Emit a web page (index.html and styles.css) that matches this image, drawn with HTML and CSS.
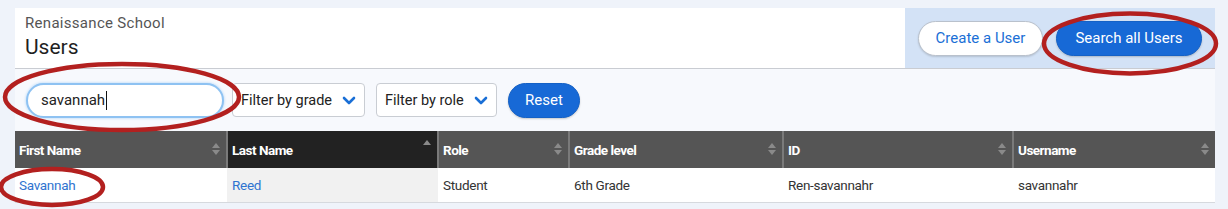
FILE: index.html
```html
<!DOCTYPE html>
<html>
<head>
<meta charset="utf-8">
<link rel="stylesheet" href="styles.css">
</head>
<body>
<div class="card">
  <div class="header">
    <div class="titles">
      <div class="school">Renaissance School</div>
      <div class="title">Users</div>
    </div>
    <div class="actions">
      <button class="btn btn-white">Create a User</button>
      <button class="btn btn-blue">Search all Users</button>
    </div>
  </div>
  <div class="filters">
    <div class="search">savannah<span class="caret"></span></div>
    <div class="select select-grade"><span>Filter by grade</span>
      <svg class="chev" width="14" height="10" viewBox="0 0 14 10"><path d="M2 2 L7 7 L12 2" fill="none" stroke="#1a6fd6" stroke-width="2.6" stroke-linecap="round" stroke-linejoin="round"/></svg>
    </div>
    <div class="select select-role"><span>Filter by role</span>
      <svg class="chev" width="14" height="10" viewBox="0 0 14 10"><path d="M2 2 L7 7 L12 2" fill="none" stroke="#1a6fd6" stroke-width="2.6" stroke-linecap="round" stroke-linejoin="round"/></svg>
    </div>
    <button class="btn btn-blue btn-reset">Reset</button>
  </div>
  <table class="users">
    <colgroup>
      <col class="c1"><col class="c2"><col class="c3"><col class="c4"><col class="c5"><col class="c6">
    </colgroup>
    <thead>
      <tr>
        <th><span>First Name</span><i class="sort both"></i></th>
        <th class="active"><span>Last Name</span><i class="sort up"></i></th>
        <th><span>Role</span><i class="sort both"></i></th>
        <th><span>Grade level</span><i class="sort both"></i></th>
        <th><span>ID</span><i class="sort both"></i></th>
        <th><span>Username</span><i class="sort both"></i></th>
      </tr>
    </thead>
    <tbody>
      <tr>
        <td><a>Savannah</a></td>
        <td class="active"><a>Reed</a></td>
        <td>Student</td>
        <td>6th Grade</td>
        <td>Ren-savannahr</td>
        <td>savannahr</td>
      </tr>
    </tbody>
  </table>
</div>
<svg class="marks" width="1228" height="209" viewBox="0 0 1228 209">
  <ellipse cx="122" cy="97" rx="117" ry="33" fill="none" stroke="#b3201f" stroke-width="4.5"/>
  <ellipse cx="1130" cy="43.5" rx="86" ry="30" fill="none" stroke="#b3201f" stroke-width="4.5"/>
  <ellipse cx="52" cy="187" rx="51" ry="18" fill="none" stroke="#b3201f" stroke-width="4.5"/>
</svg>
</body>
</html>
```

FILE: styles.css
```css
* { box-sizing: border-box; }
html, body { margin: 0; padding: 0; }
body {
  background: #eff3fa;
  font-family: Roboto, "Liberation Sans", sans-serif;
  width: 1228px;
  height: 209px;
  overflow: hidden;
  position: relative;
}
.card {
  margin: 8px 0 0 15px;
  width: 1200px;
  background: #f7f9fd;
}
.header {
  display: flex;
  height: 61px;
  background: #fff;
  border-bottom: 1px solid #c9ccd2;
}
.titles {
  flex: 1;
  padding: 5px 0 0 10px;
}
.school {
  font-size: 15px;
  letter-spacing: 0.3px;
  color: #555;
  line-height: 20px;
}
.title {
  font-size: 21px;
  color: #1f1f1f;
  line-height: 28px;
}
.actions {
  width: 310px;
  background: #d3e2f6;
  display: flex;
  align-items: center;
  padding: 0 0 0 13px;
  gap: 13px;
}
.btn {
  font-family: Roboto, "Liberation Sans", sans-serif;
  font-size: 15px;
  height: 35px;
  border-radius: 18px;
  padding: 0 16px;
  cursor: pointer;
  white-space: nowrap;
}
.btn-white {
  background: #fff;
  color: #1a6fd6;
  border: 1px solid #b9c1cc;
  box-shadow: 0 1px 2px rgba(0,0,0,0.15);
  width: 125px;
}
.btn-blue {
  background: #1769d6;
  color: #fff;
  border: 1px solid #1461c6;
  box-shadow: 0 1px 2px rgba(0,0,0,0.2);
  width: 146px;
}
.filters {
  display: flex;
  align-items: center;
  height: 62px;
  padding: 0 0 0 11px;
  gap: 8px;
}
.search {
  width: 198px;
  height: 35px;
  background: #fff;
  border: 2px solid #8ec2f2;
  box-shadow: 0 0 3px #a8d1f7;
  border-radius: 18px;
  padding: 0 0 0 13px;
  font-size: 15px;
  color: #222;
  display: flex;
  align-items: center;
}
.caret {
  display: inline-block;
  width: 1px;
  height: 19px;
  background: #111;
  margin-left: 1px;
}
.select {
  height: 34px;
  background: #fff;
  border: 1px solid #c9cdd3;
  border-radius: 4px;
  font-size: 14.5px;
  color: #222;
  display: flex;
  align-items: center;
  justify-content: space-between;
  padding: 0 8px 0 8px;
  white-space: nowrap;
}
.select-grade { width: 133px; }
.select-role { width: 121px; margin-left: 3px; }
.chev { display: block; margin-top: 1px; flex: none; }
.btn-reset {
  width: 72px;
  margin-left: 3px;
  padding: 0;
  font-size: 15px;
}
.users {
  width: 1200px;
  border-collapse: collapse;
  table-layout: fixed;
  background: #fff;
  border-bottom: 1px solid #d6d9de;
}
.c1 { width: 212px; }
.c2 { width: 211px; }
.c3 { width: 131px; }
.c4 { width: 214px; }
.c5 { width: 230px; }
.c6 { width: 202px; }
.users th {
  background: #555;
  color: #fff;
  font-size: 13.5px;
  font-weight: 700;
  letter-spacing: -0.5px;
  text-align: left;
  height: 37px;
  padding: 0 6px 0 4px;
  border-left: 2px solid #7a7a7a;
  position: relative;
}
.users th:first-child { border-left: none; }
.users th.active { background: #222; }
.users td {
  font-size: 13.5px;
  color: #333;
  height: 34px;
  padding: 1px 6px 0 5px;
  letter-spacing: -0.3px;
}
.users td:first-child { padding-left: 4px; }
.users td.active { background: #f1f1f1; }
.users a { color: #2f74d0; }
.sort {
  position: absolute;
  right: 6px;
  top: 12px;
  width: 8px;
  height: 14px;
}
.sort.both::before, .sort.up::before {
  content: "";
  position: absolute;
  left: 0;
  top: 0;
  border-left: 4px solid transparent;
  border-right: 4px solid transparent;
  border-bottom: 5px solid #8a8a8a;
}
.sort.both::after {
  content: "";
  position: absolute;
  left: 0;
  top: 7px;
  border-left: 4px solid transparent;
  border-right: 4px solid transparent;
  border-top: 5px solid #8a8a8a;
}
.sort.up { top: 9px; }
.marks {
  position: absolute;
  left: 0;
  top: 0;
  pointer-events: none;
}
```
